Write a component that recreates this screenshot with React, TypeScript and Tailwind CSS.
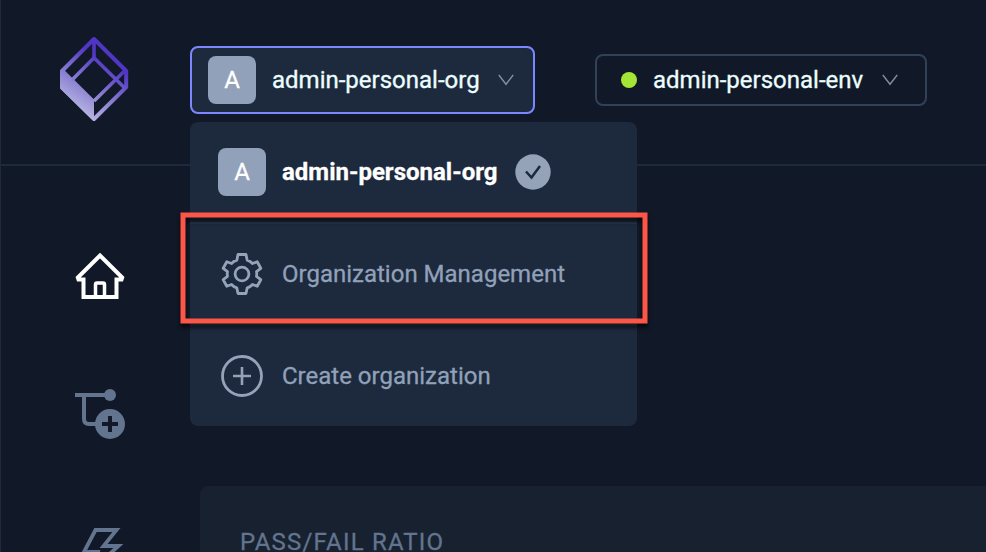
import React from 'react';

function Logo() {
  return (
    <svg width="70" height="86" viewBox="59 36 70 86" fill="none">
      <defs>
        <linearGradient id="brand" gradientUnits="userSpaceOnUse" x1="108" y1="62" x2="76" y2="112">
          <stop offset="0" stopColor="#5135c5" />
          <stop offset="0.5" stopColor="#8379cf" />
          <stop offset="1" stopColor="#bcb8e4" />
        </linearGradient>
      </defs>
      <g stroke="url(#brand)" strokeWidth="4" strokeLinejoin="round">
        <path d="M94 39 L126.200 71 V87.200 L94 119 L62 87.500 V71 Z" />
        <path d="M94.010 39 L94 57.800 L125 88.300 M94 57.800 L73 79 M94 101 L125.500 70" strokeWidth="3.600" />
      </g>
      <path d="M60.200 70.500 L64 69.800 L94 99.500 V121 L60.200 88.500 Z" fill="url(#brand)" />
    </svg>
  );
}

function Chevron() {
  return (
    <svg width="16" height="12" viewBox="0 0 16 12" fill="none" stroke="#858e9b" strokeWidth="1.4">
      <path d="M0.800 1 L8 10.300 L15.200 1" />
    </svg>
  );
}

function Avatar() {
  return (
    <span className="flex size-12 shrink-0 items-center justify-center rounded-lg bg-slate-400 text-[24px] font-normal text-white">
      A
    </span>
  );
}

function Gear() {
  return (
    <svg className="mx-[3px]" width="42" height="44" viewBox="-21 -22 42 44" fill="none" stroke="#94a3b8" strokeWidth="2.8" strokeLinejoin="round">
      <circle r="6.900" />
      <path d="M-4 -19.500 H4 L5.200 -13.800 Q8.500 -12.800 10.500 -10.500 L15.200 -12.200 L18.800 -5.700 L14.500 -2.400 Q15 0 14.500 2.400 L18.800 5.700 L15.200 12.200 L10.500 10.500 Q8.500 12.800 5.200 13.800 L4 19.500 H-4 L-5.200 13.800 Q-8.500 12.800 -10.500 10.500 L-15.200 12.200 L-18.800 5.700 L-14.500 2.400 Q-15 0 -14.500 -2.400 L-18.800 -5.700 L-15.200 -12.200 L-10.500 -10.500 Q-8.500 -12.800 -5.200 -13.800 Z" />
    </svg>
  );
}

function PlusCircle() {
  return (
    <svg className="mx-[3px]" width="42" height="42" viewBox="0 0 42 42" fill="none" stroke="#94a3b8" strokeWidth="2.800">
      <circle cx="21" cy="21" r="19.500" />
      <path d="M21 12 V30 M12 21 H30" strokeWidth="2.600" />
    </svg>
  );
}

function OrgMenu() {
  return (
    <div className="absolute top-[76px] left-0 w-[447px] rounded-lg bg-slate-800 text-slate-400">
      <div className="flex h-[100px] items-center pl-7">
        <Avatar />
        <span className="ml-4 w-[216px] text-[24px] font-bold whitespace-nowrap text-white">admin-personal-org</span>
        <svg className="ml-[17px]" width="36" height="36" viewBox="0 0 36 36" fill="none">
          <circle cx="18" cy="18" r="17.700" fill="#94a3b8" />
          <path d="M11 17.500 L16.500 23.500 L25 12" stroke="#1e293b" strokeWidth="2.500" />
        </svg>
      </div>
      <div className="flex h-[102px] items-center border-t-2 border-slate-700/60 pl-7">
        <Gear />
        <span className="ml-4 text-[24px] whitespace-nowrap">Organization Management</span>
      </div>
      <div className="flex h-[102px] items-center border-t-2 border-slate-700/60 pl-7">
        <PlusCircle />
        <span className="ml-4 text-[24px] whitespace-nowrap">Create organization</span>
      </div>
      {/* Callout frame around the highlighted menu entry */}
      <svg className="absolute top-[90px] -left-[10px] overflow-visible drop-shadow-[0_4px_2px_rgba(0,0,0,0.700)]" width="468" height="112" viewBox="0 0 468 112" fill="none">
        <rect x="3" y="3" width="462" height="106" stroke="#fc5649" strokeWidth="5" />
      </svg>
    </div>
  );
}

function Sidebar() {
  return (
    <nav className="flex w-[199px] shrink-0 flex-col items-center pr-px text-slate-500">
      <svg className="mt-[85px] shrink-0" width="50" height="50" viewBox="75 251 50 50" fill="none" stroke="#fff" strokeWidth="4">
        <path d="M83.500 297 V279.500 H78.500 L77.800 277.500 L100 255.500 L122.200 277.500 L121.500 279.500 H116.500 V297 Z" strokeLinejoin="miter" />
        <path d="M95.500 297 V284.500 Q95.500 283 97 283 H103 Q104.500 283 104.500 284.500 V297" strokeWidth="3.500" />
      </svg>
      <svg className="mt-[86px] shrink-0" width="52" height="54" viewBox="74 387 52 54" fill="none" stroke="currentColor" strokeWidth="4">
        <path d="M75 395 H106 M84 395 V419 Q84 424 89 424 H98" />
        <circle cx="110" cy="395" r="6" fill="currentColor" stroke="none" />
        <circle cx="110" cy="424" r="15" fill="currentColor" stroke="none" />
        <path d="M110 416 V432 M102 424 H118" stroke="#111827" />
      </svg>
      <svg className="mt-[86px] shrink-0" width="50" height="50" viewBox="75 527 50 50" fill="none" stroke="currentColor" strokeWidth="3.800">
        <path d="M84 552 L95.500 530 H116.500 L103.500 546 H118.500 L94 568 L98 552 Z" />
      </svg>
    </nav>
  );
}

export default function App() {
  return (
    <div className="flex h-[552px] w-[986px] flex-col overflow-hidden border-l border-slate-800 bg-[#111827] font-['Roboto',sans-serif] leading-none [-webkit-text-stroke:0.3px]">
      <header className="flex h-[166px] shrink-0 items-start border-b-2 border-slate-800">
        <div className="mt-9 ml-[58px] w-[131px]">
          <Logo />
        </div>
        <div className="relative z-10 mt-[46px] w-[345px]">
          <button className="flex h-[68px] w-full items-center rounded-lg border-2 border-indigo-400 bg-slate-800 pl-4 text-[24px] text-cyan-50">
            <Avatar />
            <span className="ml-4 w-[226px] text-left whitespace-nowrap">admin-personal-org</span>
            <Chevron />
          </button>
          <OrgMenu />
        </div>
        <button className="mt-[54px] ml-[60px] flex h-[52px] w-[332px] items-center rounded-lg border-2 border-slate-700 pl-6 text-[24px] text-cyan-50">
          <span className="size-4 rounded-full bg-[#a3e635]" />
          <span className="ml-4 w-[229px] text-left whitespace-nowrap">admin-personal-env</span>
          <Chevron />
        </button>
      </header>
      <div className="flex min-h-0 flex-1">
        <Sidebar />
        <main className="flex-1 pt-[320px]">
          <section className="h-[66px] rounded-tl-lg bg-[#182130] pt-[45px] pl-10 text-[24px] leading-[22px] tracking-[1.2px] text-slate-500">
            PASS/FAIL RATIO
          </section>
        </main>
      </div>
    </div>
  );
}
